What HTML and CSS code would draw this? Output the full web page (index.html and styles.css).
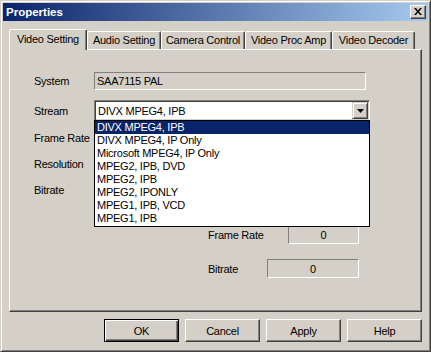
FILE: index.html
```html
<!DOCTYPE html>
<html>
<head>
<meta charset="utf-8">
<link rel="stylesheet" href="styles.css">
</head>
<body>
<div class="window">
  <div class="titlebar">
    <span class="title">Properties</span>
    <div class="close"><svg width="8" height="7" viewBox="0 0 8 7"><path d="M0 0h2l2 2.5 2-2.5h2l-3 3.5 3 3.5h-2l-2-2.5-2 2.5h-2l3-3.5z" fill="#000"/></svg></div>
  </div>
  <div class="body">
    <div class="tabs">
      <div class="tab active w1">Video Setting</div>
      <div class="tab w2">Audio Setting</div>
      <div class="tab w3">Camera Control</div>
      <div class="tab w4">Video Proc Amp</div>
      <div class="tab w5">Video Decoder</div>
    </div>
    <div class="panel">
      <div class="row r-system">
        <span class="lbl">System</span>
        <div class="static wide">SAA7115 PAL</div>
      </div>
      <div class="row r-stream">
        <span class="lbl">Stream</span>
        <div class="combo">
          <span class="combo-text">DIVX MPEG4, IPB</span>
          <div class="dropbtn"><svg width="7" height="4" viewBox="0 0 7 4"><path d="M0 0h7l-3.5 4z" fill="#000"/></svg></div>
        </div>
      </div>
      <div class="row r-lbl"><span class="lbl">Frame Rate</span></div>
      <div class="row r-lbl"><span class="lbl">Resolution</span></div>
      <div class="row r-lbl"><span class="lbl">Bitrate</span></div>
      <div class="group">
        <div class="grow g1"><span>Frame Rate</span><div class="static num fr">0</div></div>
        <div class="grow g2"><span>Bitrate</span><div class="static num br">0</div></div>
      </div>
      <ul class="droplist">
        <li class="sel">DIVX MPEG4, IPB</li>
        <li>DIVX MPEG4, IP Only</li>
        <li>Microsoft MPEG4, IP Only</li>
        <li>MPEG2, IPB, DVD</li>
        <li>MPEG2, IPB</li>
        <li>MPEG2, IPONLY</li>
        <li>MPEG1, IPB, VCD</li>
        <li>MPEG1, IPB</li>
      </ul>
    </div>
    <div class="buttons">
      <div class="btn default"><span>OK</span></div>
      <div class="btn"><span>Cancel</span></div>
      <div class="btn"><span>Apply</span></div>
      <div class="btn"><span>Help</span></div>
    </div>
  </div>
</div>
</body>
</html>
```
FILE: styles.css
```css
html, body { margin: 0; padding: 0; background: #d4d0c8; }
body { font-family: "Liberation Sans", Arial, sans-serif; font-size: 11px; color: #000; letter-spacing: -0.25px; }
.window {
  width: 431px; height: 352px; box-sizing: border-box;
  background: #d4d0c8;
  border: 1px solid; border-color: #d4d0c8 #404040 #404040 #d4d0c8;
  box-shadow: inset 1px 1px #fff, inset -1px -1px #808080;
  padding: 2px;
  display: flex; flex-direction: column;
}
.titlebar {
  height: 18px; flex: none;
  background: linear-gradient(to right, #0a246a, #a6caf0);
  display: flex; align-items: center; justify-content: space-between;
  padding: 0 2px 0 2px;
}
.title { color: #fff; font-weight: bold; font-size: 11.5px; padding-left: 1px; letter-spacing: 0; }
.close {
  width: 16px; height: 14px; box-sizing: border-box;
  background: #d4d0c8;
  border: 1px solid; border-color: #fff #404040 #404040 #fff;
  box-shadow: inset -1px -1px #808080;
  display: flex; align-items: center; justify-content: center;
}
.close svg { margin: 0 1px 1px 0; }
.body { flex: 1; display: flex; flex-direction: column; padding: 0 6px; }
.tabs { display: flex; align-items: flex-end; height: 20px; margin-top: 8px; }
.tab {
  height: 18px; box-sizing: border-box;
  border: 1px solid; border-bottom: none;
  border-color: #fff #404040 transparent #fff;
  box-shadow: inset -1px 0 #808080;
  border-radius: 2px 2px 0 0;
  display: flex; align-items: center; justify-content: center;
  padding-bottom: 1px;
}
.tab.active {
  height: 21px; margin-bottom: -1px; position: relative; z-index: 1;
  background: #d4d0c8; padding-bottom: 2px;
}
.w1 { width: 78px; } .w2 { width: 74px; } .w3 { width: 84px; } .w4 { width: 87px; } .w5 { width: 83px; }
.panel {
  position: relative; height: 263px; box-sizing: border-box;
  border: 1px solid; border-color: #fff #404040 #404040 #fff;
  box-shadow: inset -1px -1px #808080;
  padding-left: 24px;
}
.row { display: flex; align-items: center; }
.lbl { width: 60px; flex: none; }
.r-system { margin-top: 22px; height: 18px; }
.r-stream { margin-top: 10px; height: 21px; }
.r-lbl { margin-top: 8px; height: 18px; }
.static {
  box-sizing: border-box; height: 18px;
  border: 1px solid; border-color: #808080 #fff #fff #808080;
  display: flex; align-items: center;
}
.wide { width: 272px; padding-left: 2px; }
.combo {
  position: relative; box-sizing: border-box; width: 276px; height: 21px;
  background: #fff;
  border: 1px solid; border-color: #808080 #fff #fff #808080;
  box-shadow: inset 1px 1px #404040, inset -1px -1px #d4d0c8;
  display: flex; align-items: center; padding-left: 3px;
}
.dropbtn {
  position: absolute; right: 1px; top: 1px;
  width: 16px; height: 17px; box-sizing: border-box;
  background: #d4d0c8;
  border: 1px solid; border-color: #d4d0c8 #404040 #404040 #d4d0c8;
  box-shadow: inset 1px 1px #fff, inset -1px -1px #808080;
  display: flex; align-items: center; justify-content: center;
}
.group { margin-left: 174px; width: 151px; }
.grow { display: flex; align-items: center; justify-content: space-between; height: 19px; }
.g1 { margin-top: 26px; }
.g2 { margin-top: 15px; }
.num { height: 19px; justify-content: center; }
.fr { width: 71px; }
.br { width: 92px; }
.droplist {
  position: absolute; left: 84px; top: 70px; margin: 0; padding: 0;
  list-style: none; width: 276px; height: 107px; box-sizing: border-box;
  background: #fff; border: 1px solid #000;
}
.droplist li { height: 13px; line-height: 13px; padding-left: 2px; white-space: nowrap; }
.droplist li.sel { background: #0a246a; color: #fff; }
.buttons { display: flex; justify-content: flex-end; gap: 6px; margin-top: 7px; }
.btn {
  width: 75px; height: 23px; box-sizing: border-box;
  border: 1px solid; border-color: #fff #404040 #404040 #fff;
  box-shadow: inset -1px -1px #808080;
  display: flex; align-items: center; justify-content: center;
}
.btn.default {
  border-color: #000;
  box-shadow: inset 1px 1px #fff, inset -1px -1px #404040, inset -2px -2px #808080;
}
```
